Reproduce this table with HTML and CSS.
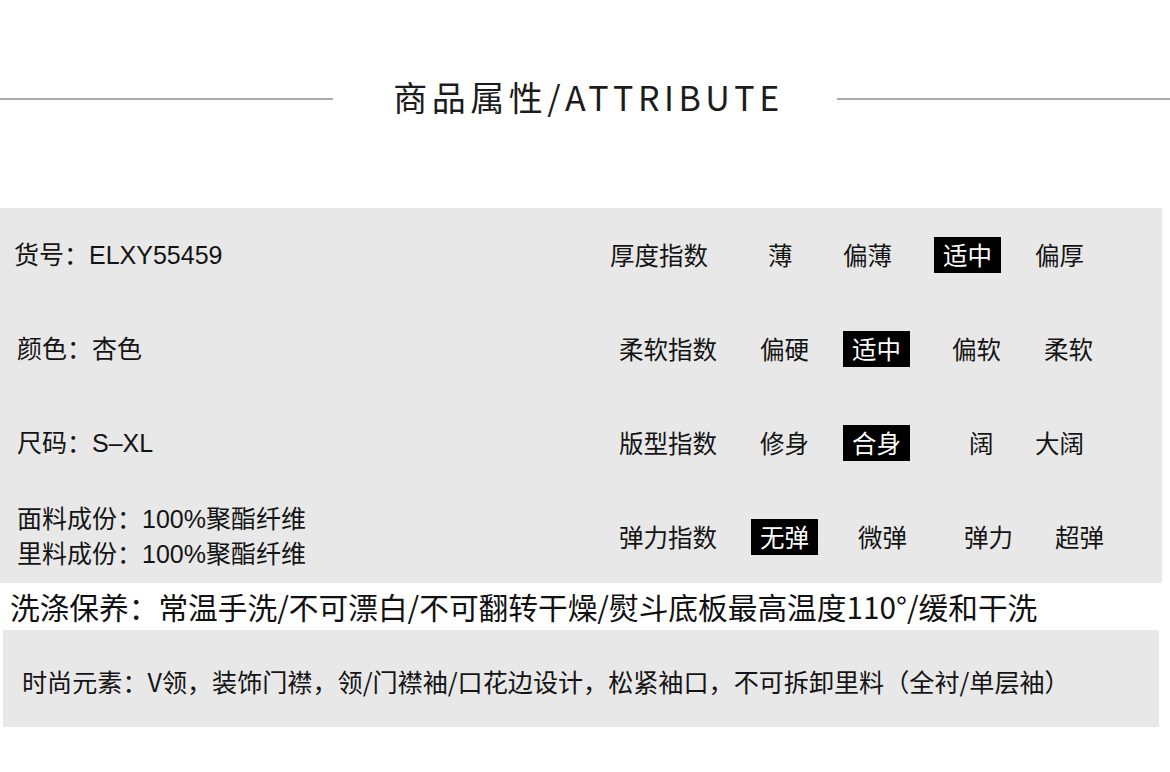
FILE: index.html
```html
<!DOCTYPE html>
<html lang="zh-CN">
<head>
<meta charset="utf-8">
<title>商品属性</title>
<link rel="stylesheet" href="styles.css">
</head>
<body>
<div class="page">
  <header class="heading">
    <span class="rule"></span>
    <h1 class="title">商品属性/ATTRIBUTE</h1>
    <span class="rule"></span>
  </header>

  <section class="attrs">
    <div class="row">
      <div class="info info-a">货号：ELXY55459</div>
      <div class="scale scale-a">
        <span class="label">厚度指数</span>
        <span class="opt">薄</span>
        <span class="opt">偏薄</span>
        <span class="opt on">适中</span>
        <span class="opt">偏厚</span>
      </div>
    </div>
    <div class="row">
      <div class="info">颜色：杏色</div>
      <div class="scale scale-b">
        <span class="label">柔软指数</span>
        <span class="opt">偏硬</span>
        <span class="opt on">适中</span>
        <span class="opt">偏软</span>
        <span class="opt">柔软</span>
      </div>
    </div>
    <div class="row">
      <div class="info">尺码：S–XL</div>
      <div class="scale scale-c">
        <span class="label">版型指数</span>
        <span class="opt">修身</span>
        <span class="opt on">合身</span>
        <span class="opt">阔</span>
        <span class="opt">大阔</span>
      </div>
    </div>
    <div class="row">
      <div class="info info-lines">
        <span>面料成份：100%聚酯纤维</span>
        <span>里料成份：100%聚酯纤维</span>
      </div>
      <div class="scale scale-d">
        <span class="label">弹力指数</span>
        <span class="opt on">无弹</span>
        <span class="opt">微弹</span>
        <span class="opt">弹力</span>
        <span class="opt">超弹</span>
      </div>
    </div>
  </section>

  <p class="care">洗涤保养：常温手洗/不可漂白/不可翻转干燥/熨斗底板最高温度110°/缓和干洗</p>

  <section class="fashion">
    <p class="fashion-text">时尚元素：V领，装饰门襟，领/门襟袖/口花边设计，松紧袖口，不可拆卸里料（全衬/单层袖）</p>
  </section>
</div>
</body>
</html>
```

FILE: styles.css
```css
* {
  box-sizing: border-box;
}

html, body {
  margin: 0;
  padding: 0;
  background: #ffffff;
}

body {
  width: 1170px;
  height: 772px;
  overflow: hidden;
  font-family: "Liberation Sans", "Noto Sans CJK SC", sans-serif;
  color: #141414;
}

.page {
  display: flex;
  flex-direction: column;
  padding-top: 79px;
}

/* heading */
.heading {
  display: flex;
  align-items: center;
  height: 40px;
}

.rule {
  flex: 1;
  height: 2px;
  background: #a9a9a9;
}

.title {
  margin: 0 53px 0 60px;
  font-family: "Noto Sans CJK SC", sans-serif;
  font-weight: 400;
  font-size: 34px;
  letter-spacing: 4.5px;
  line-height: 40px;
  color: #1c1c1c;
  white-space: nowrap;
  position: relative;
  top: -2px;
}

/* attributes block */
.attrs {
  margin-top: 89px;
  margin-right: 8px;
  height: 375px;
  background: #e8e8e8;
  display: flex;
  flex-direction: column;
}

.row {
  display: flex;
  align-items: center;
  height: 94px;
}

.row:last-child {
  height: 93px;
}

.info {
  width: 619px;
  padding-left: 17px;
  font-size: 25px;
  line-height: 30px;
  white-space: nowrap;
}

.info-a {
  width: 610px;
  padding-left: 14px;
}

.info-lines {
  display: flex;
  flex-direction: column;
  line-height: 35px;
}

.scale {
  display: grid;
  align-items: center;
  font-family: "Noto Sans CJK SC", sans-serif;
  font-size: 24.5px;
  line-height: 36px;
  white-space: nowrap;
}

.scale-a {
  grid-template-columns: 158px 75px 91px 101px auto;
}

.scale-b {
  grid-template-columns: 141px 83px 109px 92px auto;
}

.scale-c {
  grid-template-columns: 141px 83px 126px 66px auto;
}

.scale-d {
  grid-template-columns: 132px 107px 106px 91px auto;
}

.opt {
  justify-self: start;
}

.on {
  background: #000000;
  color: #ffffff;
  padding: 0 9px;
  width: 67px;
}

/* care line */
.care {
  margin: 0;
  height: 47px;
  padding-left: 10px;
  display: flex;
  align-items: center;
  font-family: "Noto Sans CJK SC", sans-serif;
  font-size: 29.7px;
  color: #111111;
  white-space: nowrap;
}

/* fashion block */
.fashion {
  margin: 0 11px 0 3px;
  height: 97px;
  background: #e8e8e8;
  display: flex;
  align-items: center;
  padding: 4px 0 0 19px;
}

.fashion-text {
  margin: 0;
  font-family: "Noto Sans CJK SC", sans-serif;
  font-size: 25.1px;
  color: #141414;
  white-space: nowrap;
}
```
